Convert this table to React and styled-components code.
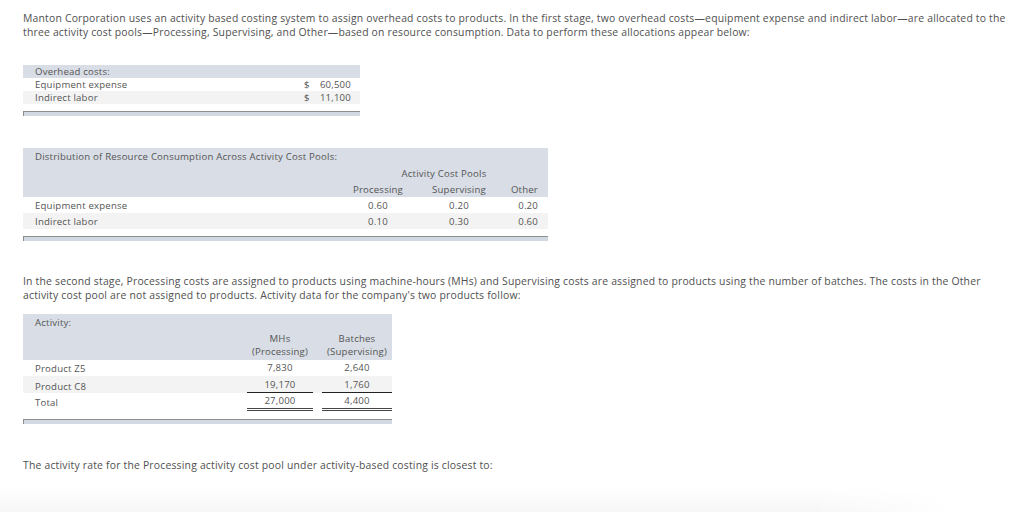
import React from 'react';
import styled, { createGlobalStyle } from 'styled-components';

const GlobalStyle = createGlobalStyle`
  html, body {
    margin: 0;
    padding: 0;
    background: #ffffff;
  }
  body {
    font-family: "Open Sans", Lato, Arial, sans-serif;
    color: #4d4d4d;
  }
`;

const Page = styled.div`
  width: 1024px;
  height: 512px;
  overflow: hidden;
  position: relative;
  padding: 11px 23px 0 23px;
  box-sizing: border-box;
`;

const Paragraph = styled.p`
  margin: 0 0 ${(p) => p.$after || 0}px 0;
  font-size: 10.4px;
  letter-spacing: 0.2px;
  line-height: 14px;
  color: #505050;
  white-space: nowrap;
`;

const TableWrap = styled.div`
  width: ${(p) => p.$width}px;
  margin-bottom: ${(p) => p.$after || 0}px;
`;

const Table = styled.table`
  width: 100%;
  border-collapse: collapse;
  table-layout: fixed;
  font-size: 9.6px;
  letter-spacing: 0.2px;
  color: #555;
`;

const Col = styled.col`
  width: ${(p) => (p.$w ? `${p.$w}px` : 'auto')};
`;

const Row = styled.tr`
  background: ${(p) => (p.$head ? '#d8dde6' : p.$alt ? '#f3f3f3' : '#ffffff')};
  height: ${(p) => p.$h || 16}px;
`;

const Cell = styled.td`
  padding: 0 ${(p) => p.$pr ?? 0}px 0 ${(p) => p.$pl ?? 12}px;
  text-align: ${(p) => p.$align || 'left'};
  vertical-align: ${(p) => p.$valign || 'middle'};
  white-space: nowrap;
  line-height: 13px;
`;

const Money = styled.div`
  display: flex;
  justify-content: space-between;
  width: 47px;
  margin-left: auto;
`;

const Figure = styled.div`
  text-align: center;
  padding: 1px 0;
  border-bottom: ${(p) =>
    p.$line === 'single' ? '1px solid #222' : p.$line === 'double' ? '3px double #444' : '1px solid transparent'};
`;

const ScrollBar = styled.div`
  height: 4px;
  margin-top: 7px;
  border-top: 1px solid #8d8d8d;
  border-left: 1px solid #8d8d8d;
  background: #d3d9e3;
`;

const Fade = styled.div`
  position: absolute;
  left: 0;
  right: 70px;
  bottom: 0;
  height: 24px;
  background: linear-gradient(to bottom, rgba(0, 0, 0, 0), rgba(0, 0, 0, 0.035));
  -webkit-mask-image: linear-gradient(to right, #000 85%, transparent 100%);
  mask-image: linear-gradient(to right, #000 85%, transparent 100%);
`;

const App = () => {
  return (
    <>
      <GlobalStyle />
      <Page>
        <Paragraph $after={26}>
          Manton Corporation uses an activity based costing system to assign overhead costs to products. In the first
          stage, two overhead costs—equipment expense and indirect labor—are allocated to the
          <br />
          three activity cost pools—Processing, Supervising, and Other—based on resource consumption. Data to perform
          these allocations appear below:
        </Paragraph>

        <TableWrap $width={337} $after={32}>
          <Table>
            <colgroup>
              <Col />
              <Col $w={90} />
            </colgroup>
            <tbody>
              <Row $head $h={13}>
                <Cell colSpan={2}>Overhead costs:</Cell>
              </Row>
              <Row $h={13}>
                <Cell>Equipment expense</Cell>
                <Cell $pr={9}>
                  <Money>
                    <span>$</span>
                    <span>60,500</span>
                  </Money>
                </Cell>
              </Row>
              <Row $alt $h={13}>
                <Cell>Indirect labor</Cell>
                <Cell $pr={9}>
                  <Money>
                    <span>$</span>
                    <span>11,100</span>
                  </Money>
                </Cell>
              </Row>
            </tbody>
          </Table>
          <ScrollBar />
        </TableWrap>

        <TableWrap $width={525} $after={33}>
          <Table>
            <colgroup>
              <Col />
              <Col $w={100} />
              <Col $w={62} />
              <Col $w={58} />
            </colgroup>
            <tbody>
              <Row $head $h={17}>
                <Cell colSpan={4}>Distribution of Resource Consumption Across Activity Cost Pools:</Cell>
              </Row>
              <Row $head $h={16}>
                <Cell />
                <Cell colSpan={3} $pl={12} $align="center">
                  Activity Cost Pools
                </Cell>
              </Row>
              <Row $head $h={16}>
                <Cell />
                <Cell $pl={0} $align="center">Processing</Cell>
                <Cell $pl={0} $align="center">Supervising</Cell>
                <Cell $pl={0} $pr={10} $align="right">Other</Cell>
              </Row>
              <Row $h={16}>
                <Cell>Equipment expense</Cell>
                <Cell $pl={0} $align="center">0.60</Cell>
                <Cell $pl={0} $align="center">0.20</Cell>
                <Cell $pl={0} $pr={10} $align="right">0.20</Cell>
              </Row>
              <Row $alt $h={16}>
                <Cell>Indirect labor</Cell>
                <Cell $pl={0} $align="center">0.10</Cell>
                <Cell $pl={0} $align="center">0.30</Cell>
                <Cell $pl={0} $pr={10} $align="right">0.60</Cell>
              </Row>
            </tbody>
          </Table>
          <ScrollBar />
        </TableWrap>

        <Paragraph $after={12}>
          In the second stage, Processing costs are assigned to products using machine-hours (MHs) and Supervising
          costs are assigned to products using the number of batches. The costs in the Other
          <br />
          activity cost pool are not assigned to products. Activity data for the company's two products follow:
        </Paragraph>

        <TableWrap $width={369} $after={34}>
          <Table>
            <colgroup>
              <Col />
              <Col $w={75} />
              <Col $w={70} />
            </colgroup>
            <tbody>
              <Row $head $h={16}>
                <Cell colSpan={3}>Activity:</Cell>
              </Row>
              <Row $head $h={30}>
                <Cell />
                <Cell $pl={0} $pr={9} $align="center">
                  MHs
                  <br />
                  (Processing)
                </Cell>
                <Cell $pl={0} $align="center">
                  Batches
                  <br />
                  (Supervising)
                </Cell>
              </Row>
              <Row $h={16}>
                <Cell>Product Z5</Cell>
                <Cell $pl={0} $pr={9}>
                  <Figure>7,830</Figure>
                </Cell>
                <Cell $pl={0}>
                  <Figure>2,640</Figure>
                </Cell>
              </Row>
              <Row $alt $h={17}>
                <Cell $valign="bottom">Product C8</Cell>
                <Cell $pl={0} $pr={9} $valign="bottom">
                  <Figure $line="single">19,170</Figure>
                </Cell>
                <Cell $pl={0} $valign="bottom">
                  <Figure $line="single">1,760</Figure>
                </Cell>
              </Row>
              <Row $h={19}>
                <Cell>Total</Cell>
                <Cell $pl={0} $pr={9} $valign="top">
                  <Figure $line="double">27,000</Figure>
                </Cell>
                <Cell $pl={0} $valign="top">
                  <Figure $line="double">4,400</Figure>
                </Cell>
              </Row>
            </tbody>
          </Table>
          <ScrollBar />
        </TableWrap>

        <Paragraph>The activity rate for the Processing activity cost pool under activity-based costing is closest to:</Paragraph>
        <Fade />
      </Page>
    </>
  );
};

export default App;
